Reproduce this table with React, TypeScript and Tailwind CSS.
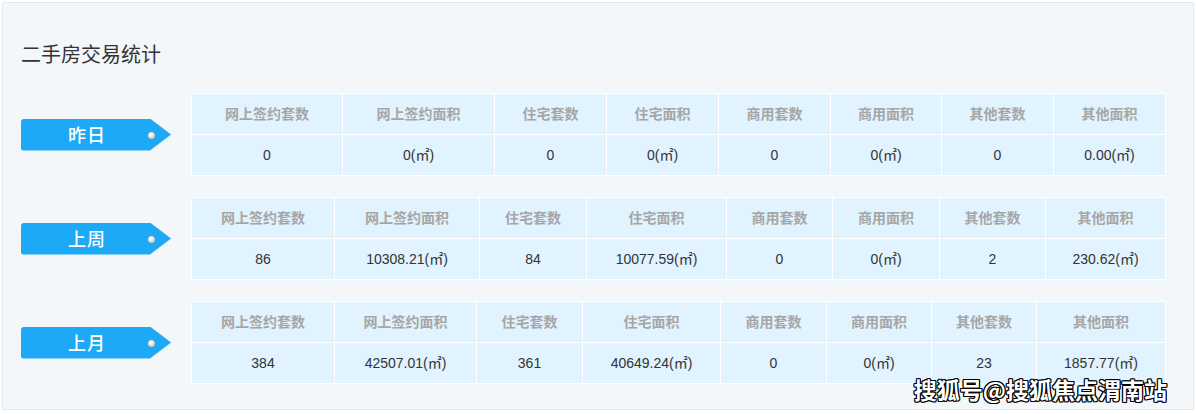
import React from 'react';

const HEADERS = ['网上签约套数', '网上签约面积', '住宅套数', '住宅面积', '商用套数', '商用面积', '其他套数', '其他面积'];

const ROWS = [
    {
        label: '昨日',
        widths: [151, 152, 112, 112, 112, 111, 112, 112],
        values: ['0', '0(㎡)', '0', '0(㎡)', '0', '0(㎡)', '0', '0.00(㎡)'],
    },
    {
        label: '上周',
        widths: [143, 145, 107, 140, 106, 107, 106, 120],
        values: ['86', '10308.21(㎡)', '84', '10077.59(㎡)', '0', '0(㎡)', '2', '230.62(㎡)'],
    },
    {
        label: '上月',
        widths: [143, 142, 106, 138, 106, 105, 105, 129],
        values: ['384', '42507.01(㎡)', '361', '40649.24(㎡)', '0', '0(㎡)', '23', '1857.77(㎡)'],
    },
];

const FONT = "font-['Liberation_Sans','Noto_Sans_CJK_SC',sans-serif]";

function Tag({ label }: { label: string }) {
    return (
        <div className="relative w-[150px] h-[32px] flex-shrink-0">
            <div className="absolute inset-0 bg-[#1ea9f6] rounded-l-[3px] [clip-path:polygon(0_0,129px_0,150px_50%,129px_100%,0_100%)]" />
            <div className="relative w-[132px] h-full flex items-center justify-center text-white text-[18px] font-medium font-['Noto_Sans_CJK_SC',sans-serif] tracking-[1px]">
                {label}
            </div>
            <div className="absolute left-[127px] top-[13px] w-[7px] h-[7px] rounded-full bg-[radial-gradient(circle_at_40%_40%,#ffffff_0%,#e6e6e6_40%,#9a9a9a_100%)]" />
        </div>
    );
}

function StatTable({ widths, values }: { widths: number[]; values: string[] }) {
    return (
        <table className={`table-fixed border-collapse w-[974px] ${FONT} text-[14px]`}>
            <colgroup>
                {widths.map((w, i) => (
                    <col key={i} style={{ width: w }} />
                ))}
            </colgroup>
            <tbody>
                <tr>
                    {HEADERS.map((h) => (
                        <th key={h} className="h-[41px] border border-white bg-[#e1f3fe] text-[#a6a6a6] font-bold text-center p-0">
                            {h}
                        </th>
                    ))}
                </tr>
                <tr>
                    {values.map((v, i) => (
                        <td key={i} className="h-[41px] border border-white bg-[#e1f3fe] text-[#333] text-center p-0">
                            {v}
                        </td>
                    ))}
                </tr>
            </tbody>
        </table>
    );
}

export default function App() {
    return (
        <div className="w-[1196px] h-[414px] bg-white p-[2px]">
            <div className="relative w-[1192px] h-[408px] border border-[#e6e9ec] bg-[#f3f7fa] pl-[18px]">
                <div className="mt-[37px] h-[28px] leading-[28px] text-[20px] text-[#333] font-['Noto_Sans_CJK_SC',sans-serif]">
                    二手房交易统计
                </div>

                <div className="mt-[25px] flex flex-col gap-[21px]">
                    {ROWS.map((r) => (
                        <div key={r.label} className="flex items-center">
                            <Tag label={r.label} />
                            <div className="ml-[20px]">
                                <StatTable widths={r.widths} values={r.values} />
                            </div>
                        </div>
                    ))}
                </div>

                {/* watermark */}
                <div className="absolute right-[26px] bottom-[3px] text-[23px] font-bold text-white font-['Noto_Sans_CJK_SC',sans-serif] [text-shadow:1px_1px_0_#000,-1px_-1px_0_#000,1px_-1px_0_#000,-1px_1px_0_#000,0_1px_0_#000,0_-1px_0_#000,1px_0_0_#000,-1px_0_0_#000]">
                    搜狐号@搜狐焦点渭南站
                </div>
            </div>
        </div>
    );
}
